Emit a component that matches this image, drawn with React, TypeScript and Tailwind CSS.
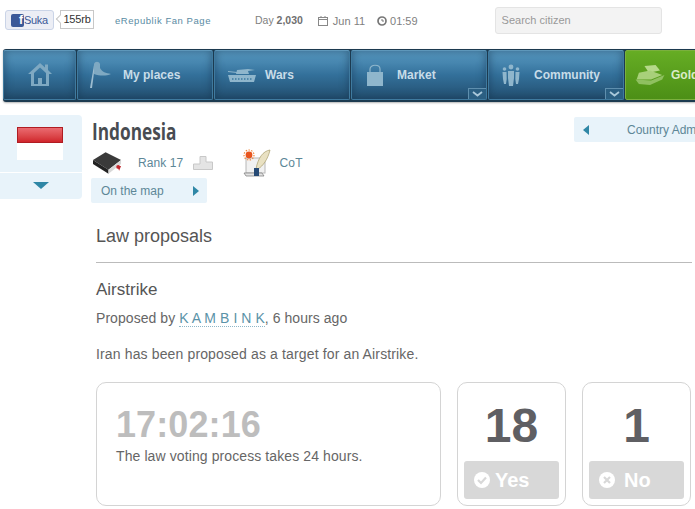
import type { ReactNode } from 'react';

const sans = 'font-["Liberation_Sans",Arial,sans-serif]';

const HomeIcon = () => (
  <svg width="24" height="24" viewBox="0 0 24 24" className="text-[#7fa9c2]">
    <path d="M12 0 L17 4.5 L17 1.5 L20 1.5 L20 7 L24 11 L21 11 L21 23 L3 23 L3 11 L0 11 Z M6 10 L6 21 L10 21 L10 15 L14 15 L14 21 L18 21 L18 10 L12 4.5 Z" fill="currentColor" fillRule="evenodd" />
  </svg>
);

const FlagIcon = () => (
  <svg width="24" height="28" viewBox="0 0 24 28" className="text-[#7fa9c2]">
    <path d="M2 27 L6 4 L7 4 L4 27 Z" fill="#9dbdd0" />
    <path d="M6 3 C7 0 11 0 12 3 L12 7 C14 11 18 12 23 13 C18 15 12 15 6 13 Z" fill="currentColor" />
  </svg>
);

const TankIcon = () => (
  <svg width="28" height="15" viewBox="0 0 28 15" className="text-[#8fb6cc]">
    <path d="M9 2 L20 1 L27 2 L20 3 L21 6 L8 6 Z" fill="currentColor" />
    <path d="M0 3 L9 4 L9 5 L0 4 Z" fill="currentColor" />
    <path d="M0 7 L28 7 L26 14 L2 14 Z" fill="currentColor" />
    <path d="M4 11 H24" stroke="#3d7ba0" strokeWidth="1.4" strokeDasharray="1.5 1.5" />
  </svg>
);

const BagIcon = () => (
  <svg width="18" height="22" viewBox="0 0 18 22" className="text-[#8fb6cc]">
    <path d="M1 8 L17 8 L17 22 L1 22 Z" fill="currentColor" />
    <path d="M4 11 L4 5 C4 0 14 0 14 5 L14 11" stroke="currentColor" strokeWidth="1.2" fill="none" />
  </svg>
);

const PeopleIcon = () => (
  <svg width="18" height="22" viewBox="0 0 18 22" className="text-[#8fb6cc]">
    <circle cx="9" cy="3" r="2.4" fill="currentColor" />
    <circle cx="2.5" cy="5" r="1.8" fill="currentColor" />
    <circle cx="15.5" cy="5" r="1.8" fill="currentColor" />
    <path d="M6 7 H12 L12 14 L11 22 H7 L6 14 Z" fill="currentColor" />
    <path d="M0.5 8 H4.5 L4.7 15 L4 20 H2 L1 15 Z M13.5 8 H17.5 L17 15 L16 20 H14 L13.3 15 Z" fill="currentColor" />
  </svg>
);

const GoldIcon = () => (
  <svg width="30" height="20" viewBox="0 0 26 18">
    <path d="M8 1 L18 0 L22 5 L12 7 Z" fill="#b6d98a" />
    <path d="M3 7 L13 5 L24 9 L14 13 L1 13 Z" fill="#a8d07a" />
    <path d="M0 13 L14 14 L26 9 L24 13 L13 18 L3 17 Z" fill="#8fc060" />
  </svg>
);

const BookIcon = () => (
  <svg width="31" height="24" viewBox="0 0 32 24" className="shrink-0">
    <path d="M1 9 L14 1 L30 9 L17 19 Z" fill="#3a3a3a" />
    <path d="M1 9 L1 13 L17 23 L17 19 Z" fill="#222222" />
    <path d="M17 19 L30 9 L30 13 L17 23 Z" fill="#d8d8d8" />
    <path d="M26 15 L30 15 L28 20 Z" fill="#c0272d" />
    <circle cx="27" cy="16" r="2" fill="#c0272d" />
  </svg>
);

const PodiumIcon = () => (
  <svg width="20" height="14" viewBox="0 0 20 14">
    <path d="M7 0.5 H13 V6 H19.5 V13.5 H0.5 V8 H7 Z" fill="#e4e4e4" stroke="#c8c8c8" />
  </svg>
);

const CotIcon = () => (
  <svg width="28" height="28" viewBox="0 0 28 28">
    <rect x="3" y="9" width="19" height="15" fill="#f1f1f1" stroke="#b8b8b8" />
    <path d="M1 24 H19 L21 27 H3 Z" fill="#e4e4e4" stroke="#777777" strokeWidth="0.7" />
    <circle cx="6" cy="6" r="3.4" fill="#e8551e" />
    <circle cx="6" cy="6" r="5" fill="none" stroke="#f0883c" strokeWidth="1.2" strokeDasharray="1.4 1.4" />
    <path d="M27 1 C20 2 15 9 13 20 L15 20 C20 17 25 10 27 1 Z" fill="#e9e1c2" stroke="#a89c6c" strokeWidth="0.7" />
    <rect x="11" y="19" width="5" height="8" fill="#274a75" />
  </svg>
);

const navSkin =
  'rounded-[2px] border border-[#3f7a9f] border-t-[#5e97ba] bg-gradient-to-b from-[#5a9cc4] via-[#33709a] to-[#234f70] shadow-[inset_0_0_10px_rgba(18,48,72,0.55)]';

const NavButton = ({ icon, label, menu, iconClass }: { icon: ReactNode; label: string; menu?: boolean; iconClass: string }) => (
  <div className={`relative flex h-[50px] w-[136px] shrink-0 items-center ${navSkin}`}>
    <div className={iconClass}>{icon}</div>
    <span className="text-[12px] font-bold text-[#c8dce8]">{label}</span>
    {menu && (
      <div className="absolute right-0 bottom-0 flex h-[11px] w-[18px] items-center justify-center border-t border-l border-[#5f8fae] bg-[#2b5f82]">
        <svg width="11" height="6" viewBox="0 0 11 6">
          <path d="M1 1 L5.5 4.5 L10 1" stroke="#a9c8da" strokeWidth="1.8" fill="none" />
        </svg>
      </div>
    )}
  </div>
);

const CheckCircle = () => (
  <svg width="16" height="16" viewBox="0 0 16 16">
    <circle cx="8" cy="8" r="8" fill="#ffffff" />
    <path d="M4 8 L7 11 L12 5.5" stroke="#d8d8d8" strokeWidth="2.2" fill="none" />
  </svg>
);

const CrossCircle = () => (
  <svg width="16" height="16" viewBox="0 0 16 16">
    <circle cx="8" cy="8" r="8" fill="#ffffff" />
    <path d="M5 5 L11 11 M11 5 L5 11" stroke="#d8d8d8" strokeWidth="2.2" />
  </svg>
);

const VoteCard = ({ count, label, icon, gap }: { count: string; label: string; icon: ReactNode; gap: string }) => (
  <div className="flex h-[124px] w-[109px] shrink-0 flex-col items-center rounded-[10px] border border-[#d4d4d4] px-[6px] pt-[16px]">
    <div className="text-[48px] leading-[54px] font-bold text-[#5f5f63]">{count}</div>
    <div className={`mt-[8px] flex h-[38px] w-[95px] items-center rounded-[3px] bg-[#d8d8d8] pl-[10px] ${gap}`}>
      {icon}
      <span className="text-[20px] font-bold text-white">{label}</span>
    </div>
  </div>
);

export default function App() {
  return (
    <div className={`${sans} h-[509px] w-[695px] overflow-hidden bg-white text-[#555555]`}>
      {/* top strip */}
      <div className="flex h-[49px] items-start">
        <div className="mt-[10px] ml-[5px] flex h-[20px] w-[49px] shrink-0 items-center rounded-[3px] border border-[#cad4e7] bg-[#eceef5] pl-[5px]">
          <div className="flex h-[13px] w-[13px] items-end justify-end rounded-[2px] bg-[#3b5998] pr-[1px] text-[12px] leading-[13px] font-bold text-white">f</div>
          <span className="text-[11px] leading-none tracking-[-0.3px] text-[#3b5998]">Suka</span>
        </div>
        <div className="relative mt-[10px] ml-[6px] flex h-[19px] w-[34px] shrink-0 items-center justify-center border border-[#c8c8c8] text-[11px] tracking-[-0.2px] text-[#333333]">
          <div className="absolute top-[5px] -left-[4px] h-[6px] w-[6px] rotate-45 border-b border-l border-[#c8c8c8] bg-white" />
          155rb
        </div>
        <div className="mt-[14px] ml-[21px] shrink-0 text-[9.5px] tracking-[0.55px] text-[#5a8ba3]">eRepublik Fan Page</div>
        <div className="mt-[13px] ml-[44px] shrink-0 text-[10.5px] text-[#808080]">
          Day <b className="text-[#707070]">2,030</b>
        </div>
        <div className="mt-[13px] ml-[15px] flex shrink-0 items-center gap-[5px] text-[11px] text-[#808080]">
          <svg width="10" height="10" viewBox="0 0 10 10">
            <rect x="0.5" y="1.5" width="9" height="8" fill="none" stroke="#888888" />
            <path d="M0 3.5 H10 M3 0 V2 M7 0 V2" stroke="#888888" />
          </svg>
          Jun 11
        </div>
        <div className="mt-[13px] ml-[12px] flex shrink-0 items-center gap-[3px] text-[11px] text-[#808080]">
          <svg width="10" height="10" viewBox="0 0 10 10">
            <circle cx="5" cy="5" r="4" fill="none" stroke="#777777" strokeWidth="1.7" />
            <path d="M5 3 V5 H7" stroke="#777777" fill="none" />
          </svg>
          01:59
        </div>
        <div className="mt-[7px] ml-[77px] flex h-[27px] w-[167px] shrink-0 items-center rounded-[3px] border border-[#e4e4e4] bg-[#f3f3f3] pl-[6px] text-[11px] text-[#999999]">
          Search citizen
        </div>
      </div>

      {/* main nav */}
      <div className="ml-[3px] flex h-[53px] w-[800px] gap-[1px] rounded-[3px] bg-[#1c3a50] pt-[1px] shadow-[0_1px_2px_rgba(0,0,0,0.3)]">
        <div className={`flex h-[50px] w-[73px] shrink-0 items-center justify-center ${navSkin}`}>
          <HomeIcon />
        </div>
        <NavButton icon={<FlagIcon />} label="My places" iconClass="ml-[10px] mr-[11px]" />
        <NavButton icon={<TankIcon />} label="Wars" iconClass="ml-[13px] mr-[9px]" />
        <NavButton icon={<BagIcon />} label="Market" iconClass="ml-[14px] mr-[13px]" menu />
        <NavButton icon={<PeopleIcon />} label="Community" iconClass="ml-[13px] mr-[14px]" menu />
        <div className="flex h-[50px] w-[136px] shrink-0 items-center rounded-[2px] border border-[#7bb03e] bg-gradient-to-b from-[#66ad24] to-[#4c8f16]">
          <div className="mr-[6px] ml-[9px]">
            <GoldIcon />
          </div>
          <span className="text-[12px] font-bold text-[#dcebc8]">Gold</span>
        </div>
      </div>

      <div className="mt-[13px] flex">
        {/* flag card */}
        <div className="flex h-[84px] w-[82px] shrink-0 flex-col rounded-r-[4px] bg-[#e8f3fa]">
          <div className="flex h-[58px] justify-center border-b border-white pt-[12px] pr-[2px]">
            <div className="h-[33px] w-[46px]">
              <div className="h-[16px] border border-[#b01c22] bg-gradient-to-b from-[#ea6a70] to-[#d0232b]" />
              <div className="h-[17px] bg-white" />
            </div>
          </div>
          <div className="flex flex-1 items-center justify-center pb-[2px]">
            <div className="h-0 w-0 border-x-[8px] border-t-[7px] border-x-transparent border-t-[#2f87a6]" />
          </div>
        </div>

        {/* country */}
        <div className="ml-[9px] w-[603px] shrink-0">
          <div className="flex items-start justify-between">
            <div>
              <div className='-mt-[2px] ml-px origin-left scale-x-[0.75] font-["Open_Sans",sans-serif] text-[23px] leading-[36px] font-bold text-[#484c52]'>Indonesia</div>
              <div className="ml-px flex h-[28px] items-center">
                <BookIcon />
                <span className="ml-[15px] text-[12px] tracking-[0.1px] text-[#5d8797]">Rank 17</span>
                <div className="ml-[10px]">
                  <PodiumIcon />
                </div>
                <div className="ml-[30px]">
                  <CotIcon />
                </div>
                <span className="ml-[8px] text-[12px] tracking-[0.3px] text-[#5d8797]">CoT</span>
              </div>
            </div>
            <div className="mt-[2px] -mr-[30px] flex h-[25px] w-[150px] shrink-0 items-center overflow-hidden rounded-[2px] bg-[#e8f3fa] pl-[9px] whitespace-nowrap">
              <div className="h-0 w-0 border-y-[5px] border-r-[6px] border-y-transparent border-r-[#2f87a6]" />
              <span className="ml-[38px] text-[12px] text-[#5d8797]">Country Administration</span>
            </div>
          </div>
          <div className="mt-[1px] flex h-[25px] w-[116px] items-center justify-between rounded-[2px] bg-[#e8f3fa] pr-[8px] pl-[10px]">
            <span className="text-[12px] text-[#5d8797]">On the map</span>
            <div className="h-0 w-0 border-y-[5px] border-l-[6px] border-y-transparent border-l-[#2f87a6]" />
          </div>
        </div>
      </div>

      {/* law proposal */}
      <div className="ml-[96px] w-[599px]">
        <h1 className="mt-[21px] text-[18px] leading-[24px] text-[#555555]">Law proposals</h1>
        <div className="mt-[14px] mr-[3px] h-[1px] bg-[#bbbbbb]" />
        <h2 className="mt-[16px] text-[17px] leading-[22px] text-[#555555]">Airstrike</h2>
        <p className="mt-[6px] text-[14px] leading-[22px] tracking-[0.06px] text-[#666666]">
          Proposed by <span className="border-b border-dotted border-[#8fb7c8] text-[#5b93a8]">K A M B I N K</span>, 6 hours ago
        </p>
        <p className="mt-[14px] text-[14px] leading-[22px] tracking-[0.14px] text-[#666666]">Iran has been proposed as a target for an Airstrike.</p>
        <div className="mt-[17px] flex">
          <div className="h-[124px] w-[345px] shrink-0 rounded-[10px] border border-[#d4d4d4] pt-[20px] pl-[19px]">
            <div className="text-[36px] leading-[44px] font-bold tracking-[0.1px] text-[#bdbdbd]">17:02:16</div>
            <div className="-mt-[1px] text-[14px] leading-[20px] tracking-[0.1px] text-[#666666]">The law voting process takes 24 hours.</div>
          </div>
          <div className="ml-[16px]">
            <VoteCard count="18" label="Yes" icon={<CheckCircle />} gap="gap-[5px]" />
          </div>
          <div className="ml-[16px]">
            <VoteCard count="1" label="No" icon={<CrossCircle />} gap="gap-[9px]" />
          </div>
        </div>
      </div>
    </div>
  );
}
